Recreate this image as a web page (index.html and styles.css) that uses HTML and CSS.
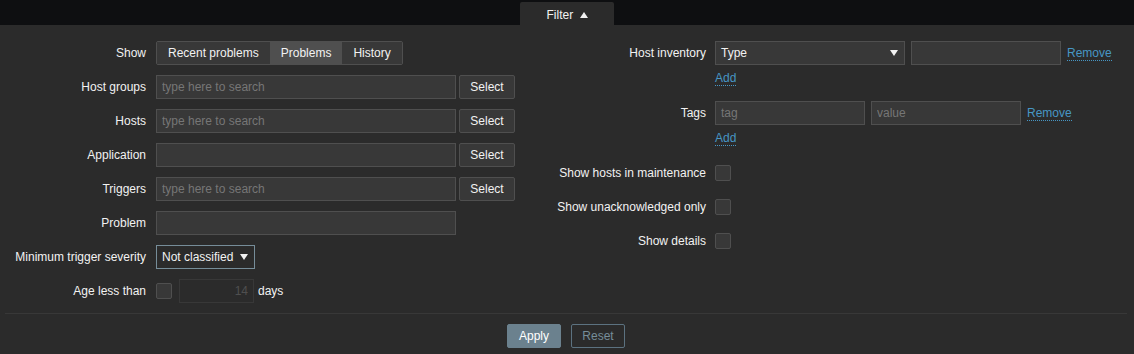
FILE: index.html
```html
<!DOCTYPE html>
<html lang="en">
<head>
    <meta charset="UTF-8">
    <meta name="viewport" content="width=device-width, initial-scale=1.0">
    <title>Problems filter</title>
    <link rel="stylesheet" href="styles.css">
</head>
<body>
    <div class="topbar">
        <div class="filter-tab">Filter <span class="arrow-up"></span></div>
    </div>

    <form class="filter" onsubmit="return false">
        <div class="filter-columns">
            <div class="form-grid left-grid">
                <label class="lbl">Show</label>
                <div class="ctl">
                    <div class="segmented">
                        <span class="seg">Recent problems</span>
                        <span class="seg active">Problems</span>
                        <span class="seg">History</span>
                    </div>
                </div>

                <label class="lbl">Host groups</label>
                <div class="ctl">
                    <input type="text" class="text wide" placeholder="type here to search">
                    <button type="button" class="btn-grey">Select</button>
                </div>

                <label class="lbl">Hosts</label>
                <div class="ctl">
                    <input type="text" class="text wide" placeholder="type here to search">
                    <button type="button" class="btn-grey">Select</button>
                </div>

                <label class="lbl">Application</label>
                <div class="ctl">
                    <input type="text" class="text wide">
                    <button type="button" class="btn-grey">Select</button>
                </div>

                <label class="lbl">Triggers</label>
                <div class="ctl">
                    <input type="text" class="text wide" placeholder="type here to search">
                    <button type="button" class="btn-grey">Select</button>
                </div>

                <label class="lbl">Problem</label>
                <div class="ctl">
                    <input type="text" class="text wide">
                </div>

                <label class="lbl">Minimum trigger severity</label>
                <div class="ctl">
                    <div class="select severity">Not classified <span class="arrow-down"></span></div>
                </div>

                <label class="lbl">Age less than</label>
                <div class="ctl">
                    <span class="checkbox"></span>
                    <input type="text" class="text age" value="14" disabled>
                    <span class="unit">days</span>
                </div>
            </div>

            <div class="form-grid right-grid">
                <label class="lbl">Host inventory</label>
                <div class="ctl-stack">
                    <div class="ctl">
                        <div class="select inventory">Type <span class="arrow-down"></span></div>
                        <input type="text" class="text narrow">
                        <a href="#" class="link">Remove</a>
                    </div>
                    <a href="#" class="link add">Add</a>
                </div>

                <label class="lbl">Tags</label>
                <div class="ctl-stack">
                    <div class="ctl">
                        <input type="text" class="text narrow" placeholder="tag">
                        <input type="text" class="text narrow" placeholder="value">
                        <a href="#" class="link">Remove</a>
                    </div>
                    <a href="#" class="link add">Add</a>
                </div>

                <label class="lbl">Show hosts in maintenance</label>
                <div class="ctl"><span class="checkbox"></span></div>

                <label class="lbl">Show unacknowledged only</label>
                <div class="ctl"><span class="checkbox"></span></div>

                <label class="lbl">Show details</label>
                <div class="ctl"><span class="checkbox"></span></div>
            </div>
        </div>

        <div class="filter-footer">
            <button type="submit" class="btn-apply">Apply</button>
            <button type="button" class="btn-reset">Reset</button>
        </div>
    </form>
</body>
</html>
```

FILE: styles.css
```css
body {
    margin: 0;
    height: 354px;
    overflow: hidden;
    font-family: "Liberation Sans", Arial, sans-serif;
    font-size: 12px;
    color: #f2f2f2;
    background-color: #2b2b2b;
}
.topbar {
    height: 25px;
    display: flex;
    justify-content: center;
    background-color: #0e0f11;
}
.filter-tab {
    width: 94px;
    height: 23px;
    margin-top: 2px;
    padding-top: 3px;
    box-sizing: border-box;
    line-height: 20px;
    text-align: center;
    background-color: #2b2b2b;
    border-radius: 2px 2px 0 0;
}
.arrow-up {
    display: inline-block;
    width: 0;
    height: 0;
    margin-left: 3px;
    vertical-align: 1px;
    border-left: 4px solid transparent;
    border-right: 4px solid transparent;
    border-bottom: 6px solid #f2f2f2;
}
.filter {
    padding-top: 16px;
}
.filter-columns {
    display: flex;
    align-items: flex-start;
}
.form-grid {
    display: grid;
    row-gap: 10px;
    grid-auto-rows: minmax(24px, auto);
    align-items: start;
    align-content: start;
}
.left-grid {
    width: 540px;
    grid-template-columns: 146px auto;
    column-gap: 10px;
}
.right-grid {
    grid-template-columns: 166px auto;
    column-gap: 9px;
}
.lbl {
    line-height: 24px;
    text-align: right;
    white-space: nowrap;
}
.ctl {
    display: flex;
    align-items: center;
    height: 24px;
}
.ctl-stack {
    display: flex;
    flex-direction: column;
    align-items: flex-start;
}
.segmented {
    display: flex;
    height: 24px;
    box-sizing: border-box;
    border: 1px solid #4f4f4f;
    border-radius: 2px;
    overflow: hidden;
}
.seg {
    padding: 0 11px;
    line-height: 22px;
    background-color: #383838;
}
.seg.active {
    background-color: #4f4f4f;
}
.text {
    height: 24px;
    box-sizing: border-box;
    margin: 0;
    padding: 0 5px;
    font-family: inherit;
    font-size: 12px;
    color: #f2f2f2;
    background-color: #383838;
    border: 1px solid #4f4f4f;
    outline: none;
}
.text::placeholder {
    color: #767676;
}
.wide {
    width: 300px;
}
.narrow {
    width: 150px;
    margin-right: 6px;
}
.btn-grey {
    width: 56px;
    height: 24px;
    margin-left: 3px;
    padding: 0;
    font-family: inherit;
    font-size: 12px;
    color: #f2f2f2;
    background-color: #383838;
    border: 1px solid #4f4f4f;
    border-radius: 2px;
}
.select {
    display: flex;
    align-items: center;
    justify-content: space-between;
    height: 24px;
    box-sizing: border-box;
    padding: 0 6px 0 5px;
    border: 1px solid #4f4f4f;
    background-color: #383838;
}
.severity {
    width: 99px;
    border-color: #768d99;
    background-color: #2b2b2b;
}
.inventory {
    width: 190px;
    margin-right: 6px;
}
.arrow-down {
    width: 0;
    height: 0;
    border-left: 4px solid transparent;
    border-right: 4px solid transparent;
    border-top: 6px solid #f2f2f2;
}
.checkbox {
    width: 16px;
    height: 16px;
    box-sizing: border-box;
    background-color: #383838;
    border: 1px solid #4f4f4f;
    border-radius: 2px;
}
.age {
    width: 75px;
    margin-left: 7px;
    text-align: right;
    color: #4f4f4f;
    background-color: #2b2b2b;
    border-color: #383838;
}
.unit {
    margin-left: 4px;
}
.link {
    color: #4796c4;
    text-decoration: none;
    border-bottom: 1px dotted #4796c4;
    line-height: 14px;
}
.add {
    margin: 6px 0 5px;
}
.filter-footer {
    display: flex;
    justify-content: center;
    gap: 10px;
    margin: 10px 7px 0 5px;
    padding-top: 10px;
    border-top: 1px solid #383838;
}
.btn-apply,
.btn-reset {
    width: 54px;
    height: 24px;
    padding: 0;
    font-family: inherit;
    font-size: 12px;
    border-radius: 2px;
}
.btn-apply {
    color: #ffffff;
    background-color: #6b818e;
    border: 1px solid #6b818e;
}
.btn-reset {
    color: #768d99;
    background-color: #2b2b2b;
    border: 1px solid #5c7280;
}
```
